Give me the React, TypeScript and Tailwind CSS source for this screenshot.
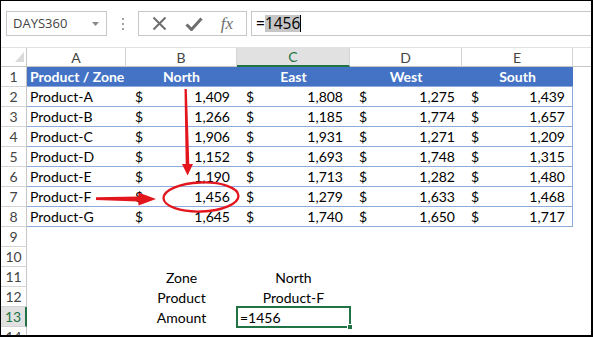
import React from "react";

type Row = [string, number, number, number, number];

const data: Row[] = [
  ["Product-A", 1409, 1808, 1275, 1439],
  ["Product-B", 1266, 1185, 1774, 1657],
  ["Product-C", 1906, 1931, 1271, 1209],
  ["Product-D", 1152, 1693, 1748, 1315],
  ["Product-E", 1190, 1713, 1282, 1480],
  ["Product-F", 1456, 1279, 1633, 1468],
  ["Product-G", 1645, 1740, 1650, 1717],
];

const cols = [
  { id: "A", w: "w-[99px]" },
  { id: "B", w: "w-[111px]" },
  { id: "C", w: "w-[113px]" },
  { id: "D", w: "w-[112px]" },
  { id: "E", w: "w-[111px]" },
];

function RowHead({ n, active }: { n: number; active?: boolean }) {
  return (
    <div
      className={`w-[26px] shrink-0 flex items-center justify-center border-b border-[#d4d4d4] text-[14px] ${
        active
          ? "bg-[#e1e1e1] text-[#217346] border-r-2 border-r-[#217346]"
          : "bg-white text-[#444] border-r border-r-[#c6c6c6]"
      }`}
    >
      {n}
    </div>
  );
}

function Money({ value, w, last }: { value: number; w: string; last?: boolean }) {
  return (
    <div
      className={`${w} shrink-0 flex items-center justify-between pl-[9px] pr-[7px] border-b border-[#8ea9db] ${
        last ? "border-r" : ""
      }`}
    >
      <span>$</span>
      <span>{value.toLocaleString("en-US")}</span>
    </div>
  );
}

function FormulaBar() {
  return (
    <div className="h-[46px] shrink-0 flex items-start pt-[10px] bg-white font-['Open_Sans',sans-serif]">
      <div className="ml-[5px] w-[101px] h-[25px] border border-[#c6c6c6] flex items-center justify-between pl-[6px] pr-[7px]">
        <span className="text-[13px] text-[#444]">DAYS360</span>
        <svg width="7" height="4" viewBox="0 0 7 4">
          <path d="M0 0h7L3.5 4z" fill="#8a8a8a" />
        </svg>
      </div>
      <div className="w-[31px] h-[25px] flex flex-col items-center justify-center gap-[3px]">
        <span className="w-[2px] h-[2px] bg-[#a0a0a0]" />
        <span className="w-[2px] h-[2px] bg-[#a0a0a0]" />
        <span className="w-[2px] h-[2px] bg-[#a0a0a0]" />
      </div>
      <div className="w-[109px] h-[25px] border border-[#c6c6c6] flex items-center justify-around px-[4px]">
        <svg width="15" height="15" viewBox="0 0 15 15">
          <path d="M1.5 1.5l12 12M13.5 1.5l-12 12" stroke="#6e6e6e" strokeWidth="2" />
        </svg>
        <svg width="18" height="14" viewBox="0 0 18 14">
          <path d="M1.5 7.5l5 5L16.5 1.5" stroke="#6e6e6e" strokeWidth="3" fill="none" />
        </svg>
        <span className="text-[17px] italic text-[#6e6e6e] font-['Liberation_Serif',serif] leading-none">fx</span>
      </div>
      <div className="ml-[4px] flex-1 h-[25px] border-y border-l border-[#c6c6c6] flex items-center pl-[4px] text-[15.5px] text-black">
        <span>=</span>
        <span className="bg-[#c6c6c6] leading-[17px]">1456</span>
        <span className="w-[1px] h-[17px] bg-black" />
      </div>
    </div>
  );
}

export default function App() {
  return (
    <div className="relative w-[593px] h-[337px] overflow-hidden bg-white border-t border-l border-r-2 border-b-2 border-black flex flex-col font-['Lato',sans-serif] text-[14px] text-black">
      <FormulaBar />

      {/* column headers */}
      <div className="flex h-[20px] shrink-0 border-t border-[#e1e1e1] text-[#444]">
        <div className="w-[26px] shrink-0 relative border-r border-b border-[#c6c6c6]">
          <svg className="absolute left-[14px] top-[4px]" width="9" height="10" viewBox="0 0 9 10">
            <path d="M9 0V10H0z" fill="#dadada" />
          </svg>
        </div>
        {cols.map((c) => (
          <div
            key={c.id}
            className={`${c.w} shrink-0 flex items-center justify-center border-r border-[#d4d4d4] ${
              c.id === "C"
                ? "bg-[#e1e1e1] text-[#217346] border-b-2 border-b-[#217346]"
                : "border-b border-b-[#c6c6c6]"
            }`}
          >
            {c.id}
          </div>
        ))}
        <div className="flex-1 border-b border-[#c6c6c6]" />
      </div>

      {/* row 1: table header */}
      <div className="flex h-[20px] shrink-0">
        <RowHead n={1} />
        <div className="w-[99px] shrink-0 flex items-center pl-[3px] bg-[#4472c4] text-white font-bold border-b border-[#8ea9db]">
          Product / Zone
        </div>
        {["North", "East", "West", "South"].map((z, i) => (
          <div
            key={z}
            className={`${cols[i + 1].w} shrink-0 flex items-center justify-center bg-[#4472c4] text-white font-bold border-b border-[#8ea9db]`}
          >
            {z}
          </div>
        ))}
      </div>

      {/* rows 2-8 */}
      {data.map((r, i) => (
        <div key={r[0]} className="flex h-[20px] shrink-0">
          <RowHead n={i + 2} />
          <div className="w-[99px] shrink-0 flex items-center pl-[3px] border-b border-[#8ea9db]">{r[0]}</div>
          <Money value={r[1]} w="w-[111px]" />
          <Money value={r[2]} w="w-[113px]" />
          <Money value={r[3]} w="w-[112px]" />
          <Money value={r[4]} w="w-[111px]" last />
        </div>
      ))}

      {/* rows 9-14 */}
      {[9, 10, 11, 12, 13, 14].map((n) => {
        const left = n === 11 ? "Zone" : n === 12 ? "Product" : n === 13 ? "Amount" : "";
        const right = n === 11 ? "North" : n === 12 ? "Product-F" : "";
        return (
          <div key={n} className="flex h-[20px] shrink-0">
            <RowHead n={n} active={n === 13} />
            <div className="w-[99px] shrink-0" />
            <div className="w-[111px] shrink-0 flex items-center justify-center">{left}</div>
            <div className={`w-[113px] shrink-0 flex items-center ${n === 13 ? "pl-[3px]" : "justify-center"}`}>
              {n === 13 ? "=1456" : right}
            </div>
            <div className="flex-1" />
          </div>
        );
      })}

      {/* annotations + selection, drawn over the sheet */}
      <svg
        className="absolute left-[-1px] top-[-1px] pointer-events-none"
        width="593"
        height="337"
        viewBox="0 0 593 337"
      >
        <rect x="237" y="307" width="113" height="20" fill="none" stroke="#217346" strokeWidth="2" />
        <rect x="347.5" y="324.5" width="5" height="5" fill="#217346" stroke="#fff" strokeWidth="1" />
        <polygon points="184.5,89 186.8,89 189.3,164 193,164 187.6,175.5 182,164 185.7,164" fill="#e3161e" />
        <polygon points="96,197.2 138.5,196.6 138.5,192.6 156,199 138.5,205.4 138.5,201.4 96,200" fill="#e3161e" />
        <ellipse
          cx="201"
          cy="197"
          rx="37.5"
          ry="14.5"
          fill="none"
          stroke="#e3161e"
          strokeWidth="2.3"
          transform="rotate(-2 201 197)"
        />
      </svg>
    </div>
  );
}
